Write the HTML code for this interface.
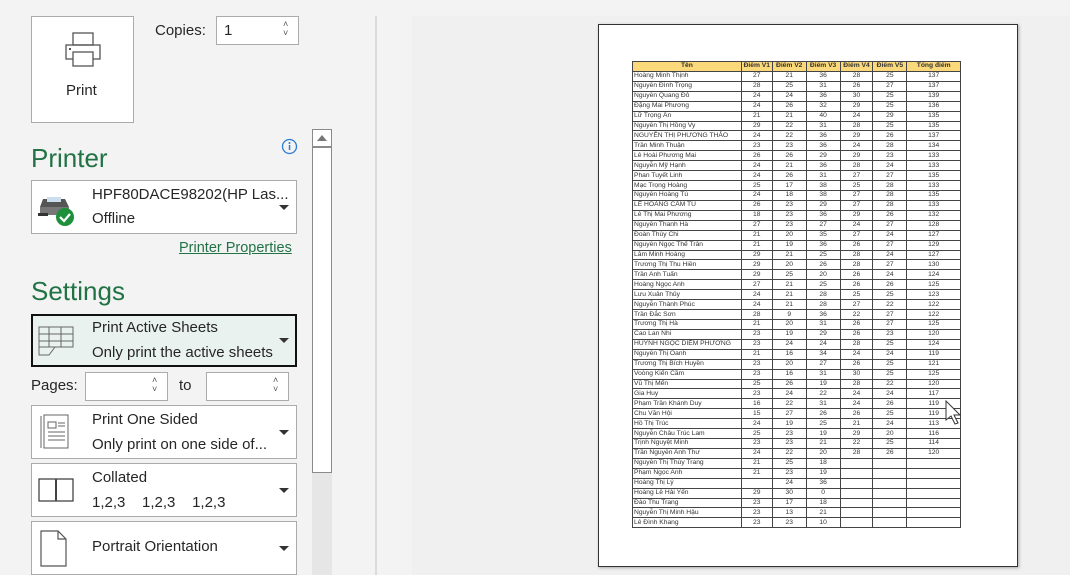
<!DOCTYPE html>
<html><head><meta charset="utf-8"><style>
*{margin:0;padding:0;box-sizing:border-box}
body{width:1070px;height:575px;background:#f3f3f3;font-family:"Segoe UI","Liberation Sans","DejaVu Sans",sans-serif;color:#262626;position:relative;overflow:hidden}
.a{position:absolute}
.box{position:absolute;background:#fff;border:1px solid #ababab}
.t{font-size:15px;color:#262626;position:absolute;white-space:nowrap}
.h{font-size:26px;color:#217346;position:absolute}
.dd{position:absolute;width:0;height:0;border-left:5px solid transparent;border-right:5px solid transparent;border-top:5px solid #333}
.spin{position:absolute;font-size:9px;color:#555;line-height:9px}
table{border-collapse:collapse;font-family:"Liberation Sans",sans-serif;font-size:6.7px;color:#333}
td{border:1px solid #444;height:9.93px;padding:0 1px;line-height:8px;text-align:center;white-space:nowrap;overflow:hidden}
td:first-child{text-align:left}
tr.hd td{background:#fbd97a;font-weight:bold;text-align:center}
</style></head><body>
<div class="a" style="left:375px;top:16px;width:2px;height:559px;background:#dcdcdc"></div>
<div class="a" style="left:412px;top:16px;width:658px;height:559px;background:#f0f0f0"></div>

<div class="box" style="left:31px;top:16px;width:103px;height:107px;background:#fff">
<svg class="a" style="left:32px;top:14px" width="38" height="38" viewBox="0 0 38 38" fill="none" stroke="#555" stroke-width="1.3">
<rect x="9" y="2" width="20" height="12"/><rect x="2" y="14" width="34" height="14"/><rect x="9" y="21" width="20" height="14" fill="#fff"/><rect x="5" y="17" width="2" height="2" fill="#555" stroke="none"/></svg>
<div class="t" style="left:34px;top:65px;font-size:15px">Print</div>
</div>
<div class="t" style="left:155px;top:22px">Copies:</div>
<div class="box" style="left:216px;top:16px;width:83px;height:29px"><div class="t" style="left:7px;top:5px">1</div><div class="spin" style="left:66px;top:3px">˄<br>˅</div></div>

<div class="h" style="left:31px;top:143px">Printer</div>
<svg class="a" style="left:281px;top:138px" width="17" height="17"><circle cx="8.5" cy="8.5" r="7" fill="none" stroke="#2b7cd3" stroke-width="1.3"/><rect x="7.8" y="7" width="1.5" height="5" fill="#2b7cd3"/><circle cx="8.5" cy="5" r="1" fill="#2b7cd3"/></svg>
<div class="box" style="left:31px;top:180px;width:266px;height:54px">
<svg class="a" style="left:5px;top:12px" width="40" height="34"><path d="M6 6h22l4 8H3z" fill="#555"/><rect x="10" y="4" width="14" height="5" fill="#cde"/><rect x="3" y="14" width="29" height="8" fill="#777"/><rect x="1" y="20" width="10" height="3" fill="#333"/><circle cx="28" cy="24" r="9" fill="#1e8f3a"/><path d="M23 24l4 4 6-7" stroke="#fff" stroke-width="2.2" fill="none"/></svg>
<div class="t" style="left:60px;top:5px">HPF80DACE98202(HP Las...</div>
<div class="t" style="left:60px;top:29px">Offline</div>
<div class="dd" style="left:247px;top:24px"></div>
</div>
<div class="t" style="left:179px;top:240px;color:#217346;text-decoration:underline;font-size:14.5px">Printer Properties</div>

<div class="h" style="left:31px;top:276px">Settings</div>
<div class="a" style="left:31px;top:314px;width:266px;height:53px;background:#e9f2ee;border:2px solid #111">
<svg class="a" style="left:4px;top:9px" width="38" height="34" fill="none" stroke="#666" stroke-width="1"><path d="M2 2h34v20H2zM2 9h34M2 16h34M12 2v20M24 2v20M2 22v8h10l6-8"/></svg>
<div class="t" style="left:59px;top:3px">Print Active Sheets</div>
<div class="t" style="left:59px;top:28px">Only print the active sheets</div>
<div class="dd" style="left:246px;top:22px"></div>
</div>
<div class="t" style="left:31px;top:377px">Pages:</div>
<div class="box" style="left:85px;top:372px;width:83px;height:29px"><div class="spin" style="left:66px;top:3px">˄<br>˅</div></div>
<div class="t" style="left:179px;top:377px">to</div>
<div class="box" style="left:206px;top:372px;width:83px;height:29px"><div class="spin" style="left:66px;top:3px">˄<br>˅</div></div>

<div class="box" style="left:31px;top:405px;width:266px;height:54px">
<svg class="a" style="left:8px;top:8px" width="30" height="36" fill="none" stroke="#666" stroke-width="1"><path d="M1 2v32M4 1h24v33H4zM8 8h8v6H8zM18 9h7M18 12h7M8 18h17M8 22h17M8 26h17"/></svg>
<div class="t" style="left:60px;top:5px">Print One Sided</div>
<div class="t" style="left:60px;top:30px">Only print on one side of...</div>
<div class="dd" style="left:247px;top:24px"></div>
</div>
<div class="box" style="left:31px;top:463px;width:266px;height:54px">
<svg class="a" style="left:6px;top:14px" width="38" height="26" fill="none" stroke="#444" stroke-width="1.3"><rect x="1" y="1" width="34" height="22"/><path d="M18 1v22" stroke-width="2"/></svg>
<div class="t" style="left:60px;top:5px">Collated</div>
<div class="t" style="left:60px;top:30px">1,2,3&nbsp;&nbsp;&nbsp;&nbsp;1,2,3&nbsp;&nbsp;&nbsp;&nbsp;1,2,3</div>
<div class="dd" style="left:247px;top:24px"></div>
</div>
<div class="box" style="left:31px;top:521px;width:266px;height:54px">
<svg class="a" style="left:8px;top:8px" width="28" height="38" fill="none" stroke="#555" stroke-width="1.2"><path d="M1 1h17l8 8v27H1zM18 1v8h8"/></svg>
<div class="t" style="left:60px;top:16px">Portrait Orientation</div>
<div class="dd" style="left:247px;top:24px"></div>
</div>

<div class="a" style="left:312px;top:472px;width:20px;height:103px;background:#e6e6e6"></div>
<div class="a" style="left:312px;top:129px;width:20px;height:344px;background:#fff;border:1px solid #8a8a8a"></div>
<div class="a" style="left:313px;top:146px;width:18px;height:2px;background:#8a8a8a"></div>
<div class="a" style="left:317px;top:135px;width:0;height:0;border-left:5px solid transparent;border-right:5px solid transparent;border-bottom:6px solid #777"></div>

<div class="a" style="left:598px;top:24px;width:420px;height:543px;background:#fff;border:1px solid #333;box-shadow:1px 1px 3px rgba(0,0,0,.3)"></div>
<table class="a" style="left:632px;top:61px;width:329px">
<colgroup><col style="width:109px"><col style="width:31px"><col style="width:34px"><col style="width:34px"><col style="width:33px"><col style="width:34px"><col style="width:54px"></colgroup>
<tr class="hd"><td>Tên</td><td>Điểm V1</td><td>Điểm V2</td><td>Điểm V3</td><td>Điểm V4</td><td>Điểm V5</td><td>Tổng điểm</td></tr>
<tr><td>Hoàng Minh Thịnh</td><td>27</td><td>21</td><td>36</td><td>28</td><td>25</td><td>137</td></tr>
<tr><td>Nguyễn Đình Trọng</td><td>28</td><td>25</td><td>31</td><td>26</td><td>27</td><td>137</td></tr>
<tr><td>Nguyễn Quang Đô</td><td>24</td><td>24</td><td>36</td><td>30</td><td>25</td><td>139</td></tr>
<tr><td>Đặng Mai Phương</td><td>24</td><td>26</td><td>32</td><td>29</td><td>25</td><td>136</td></tr>
<tr><td>Lữ Trọng Ân</td><td>21</td><td>21</td><td>40</td><td>24</td><td>29</td><td>135</td></tr>
<tr><td>Nguyễn Thị Hồng Vy</td><td>29</td><td>22</td><td>31</td><td>28</td><td>25</td><td>135</td></tr>
<tr><td>NGUYỄN THỊ PHƯƠNG THẢO</td><td>24</td><td>22</td><td>36</td><td>29</td><td>26</td><td>137</td></tr>
<tr><td>Trần Minh Thuận</td><td>23</td><td>23</td><td>36</td><td>24</td><td>28</td><td>134</td></tr>
<tr><td>Lê Hoài Phương Mai</td><td>26</td><td>26</td><td>29</td><td>29</td><td>23</td><td>133</td></tr>
<tr><td>Nguyễn Mỹ Hạnh</td><td>24</td><td>21</td><td>36</td><td>28</td><td>24</td><td>133</td></tr>
<tr><td>Phan Tuyết Linh</td><td>24</td><td>26</td><td>31</td><td>27</td><td>27</td><td>135</td></tr>
<tr><td>Mạc Trọng Hoàng</td><td>25</td><td>17</td><td>38</td><td>25</td><td>28</td><td>133</td></tr>
<tr><td>Nguyễn Hoàng Tú</td><td>24</td><td>18</td><td>38</td><td>27</td><td>28</td><td>135</td></tr>
<tr><td>LÊ HOÀNG CẨM TÚ</td><td>26</td><td>23</td><td>29</td><td>27</td><td>28</td><td>133</td></tr>
<tr><td>Lê Thị Mai Phương</td><td>18</td><td>23</td><td>36</td><td>29</td><td>26</td><td>132</td></tr>
<tr><td>Nguyễn Thanh Hà</td><td>27</td><td>23</td><td>27</td><td>24</td><td>27</td><td>128</td></tr>
<tr><td>Đoàn Thùy Chi</td><td>21</td><td>20</td><td>35</td><td>27</td><td>24</td><td>127</td></tr>
<tr><td>Nguyễn Ngọc Thế Trân</td><td>21</td><td>19</td><td>36</td><td>26</td><td>27</td><td>129</td></tr>
<tr><td>Lâm Minh Hoàng</td><td>29</td><td>21</td><td>25</td><td>28</td><td>24</td><td>127</td></tr>
<tr><td>Trương Thị Thu Hiền</td><td>29</td><td>20</td><td>26</td><td>28</td><td>27</td><td>130</td></tr>
<tr><td>Trần Anh Tuấn</td><td>29</td><td>25</td><td>20</td><td>26</td><td>24</td><td>124</td></tr>
<tr><td>Hoàng Ngọc Anh</td><td>27</td><td>21</td><td>25</td><td>26</td><td>26</td><td>125</td></tr>
<tr><td>Lưu Xuân Thủy</td><td>24</td><td>21</td><td>28</td><td>25</td><td>25</td><td>123</td></tr>
<tr><td>Nguyễn Thành Phúc</td><td>24</td><td>21</td><td>28</td><td>27</td><td>22</td><td>122</td></tr>
<tr><td>Trần Đắc Sơn</td><td>28</td><td>9</td><td>36</td><td>22</td><td>27</td><td>122</td></tr>
<tr><td>Trương Thị Hà</td><td>21</td><td>20</td><td>31</td><td>26</td><td>27</td><td>125</td></tr>
<tr><td>Cao Lan Nhi</td><td>23</td><td>19</td><td>29</td><td>26</td><td>23</td><td>120</td></tr>
<tr><td>HUỲNH NGỌC DIỄM PHƯƠNG</td><td>23</td><td>24</td><td>24</td><td>28</td><td>25</td><td>124</td></tr>
<tr><td>Nguyễn Thị Oanh</td><td>21</td><td>16</td><td>34</td><td>24</td><td>24</td><td>119</td></tr>
<tr><td>Trương Thị Bích Huyền</td><td>23</td><td>20</td><td>27</td><td>26</td><td>25</td><td>121</td></tr>
<tr><td>Voòng Kiến Cầm</td><td>23</td><td>16</td><td>31</td><td>30</td><td>25</td><td>125</td></tr>
<tr><td>Vũ Thị Mến</td><td>25</td><td>26</td><td>19</td><td>28</td><td>22</td><td>120</td></tr>
<tr><td>Gia Huy</td><td>23</td><td>24</td><td>22</td><td>24</td><td>24</td><td>117</td></tr>
<tr><td>Phạm Trần Khánh Duy</td><td>16</td><td>22</td><td>31</td><td>24</td><td>26</td><td>119</td></tr>
<tr><td>Chu Văn Hội</td><td>15</td><td>27</td><td>26</td><td>26</td><td>25</td><td>119</td></tr>
<tr><td>Hồ Thị Trúc</td><td>24</td><td>19</td><td>25</td><td>21</td><td>24</td><td>113</td></tr>
<tr><td>Nguyễn Châu Trúc Lam</td><td>25</td><td>23</td><td>19</td><td>29</td><td>20</td><td>116</td></tr>
<tr><td>Trịnh Nguyệt Minh</td><td>23</td><td>23</td><td>21</td><td>22</td><td>25</td><td>114</td></tr>
<tr><td>Trần Nguyễn Anh Thư</td><td>24</td><td>22</td><td>20</td><td>28</td><td>26</td><td>120</td></tr>
<tr><td>Nguyễn Thị Thùy Trang</td><td>21</td><td>25</td><td>18</td><td></td><td></td><td></td></tr>
<tr><td>Phạm Ngọc Anh</td><td>21</td><td>23</td><td>19</td><td></td><td></td><td></td></tr>
<tr><td>Hoàng Thị Lý</td><td></td><td>24</td><td>36</td><td></td><td></td><td></td></tr>
<tr><td>Hoàng Lê Hải Yến</td><td>29</td><td>30</td><td>0</td><td></td><td></td><td></td></tr>
<tr><td>Đào Thu Trang</td><td>23</td><td>17</td><td>18</td><td></td><td></td><td></td></tr>
<tr><td>Nguyễn Thị Minh Hậu</td><td>23</td><td>13</td><td>21</td><td></td><td></td><td></td></tr>
<tr><td>Lê Đình Khang</td><td>23</td><td>23</td><td>10</td><td></td><td></td><td></td></tr>
</table>
<svg class="a" style="left:945px;top:400px" width="18" height="26"><path d="M1 1v19l5-4 4 8 3-1-4-8h6z" fill="#fff" stroke="#333" stroke-width="1"/></svg>
</body></html>
